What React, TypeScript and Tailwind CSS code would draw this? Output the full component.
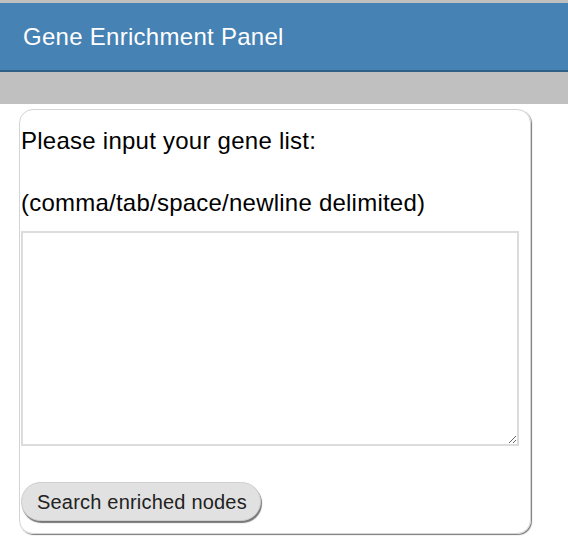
import React from 'react';

export default function App() {
  return (
    <div className="min-h-[552px] bg-white font-['Liberation_Sans',Arial,sans-serif] text-black">
      {/* top header */}
      <div className="h-[3px] bg-[#c0c0c0]" />
      <div className="h-[67px] bg-[#4682b4] flex items-center pl-[23px] text-white text-[24px] tracking-[0.28px]">
        Gene Enrichment Panel
      </div>
      <div className="h-[2px] bg-[#2f5f86]" />
      <div className="h-[32px] bg-[#c0c0c0]" />

      {/* panel body */}
      <div className="pt-[5px] pl-[19px]">
        <div className="w-[512px] h-[425px] border border-[#d4d4d4] rounded-[14px] shadow-[1px_1px_1px_#7a7a7a] pl-px pt-[17px] flex flex-col items-start">
          <p className="text-[24px] leading-[28px] tracking-[0.25px]">Please input your gene list:</p>
          <p className="mt-[34px] text-[24px] leading-[28px] tracking-[0.23px]">(comma/tab/space/newline delimited)</p>
          <textarea className="mt-[14px] w-[498px] h-[215px] shrink-0 border-2 border-[#dcdcdc] bg-white outline-none text-[20px]" />
          <button className="mt-[36px] h-[39px] w-[240px] pl-[15px] text-left rounded-full bg-[#e1e1e1] border border-[#cfcfcf] shadow-[1px_2px_1px_#777] text-[20px] tracking-[0.2px] text-[#222]">
            Search enriched nodes
          </button>
        </div>
      </div>
    </div>
  );
}
